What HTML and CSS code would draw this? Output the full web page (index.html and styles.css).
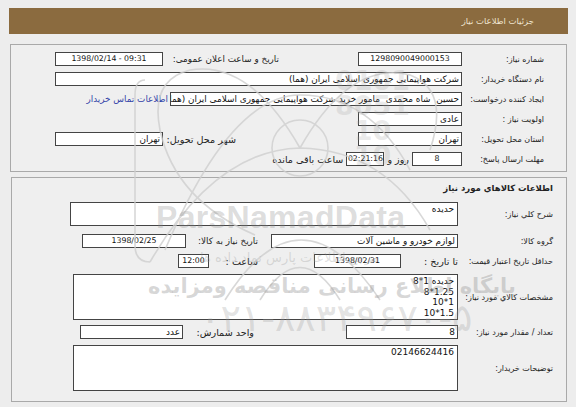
FILE: index.html
```html
<!DOCTYPE html>
<html lang="fa" dir="rtl">
<head>
<meta charset="utf-8">
<title>جزئیات اطلاعات نیاز</title>
<link rel="stylesheet" href="styles.css">
</head>
<body>
<div class="page">
  <div class="header">جزئیات اطلاعات نیاز</div>

  <div class="panel panel-top">
    <div class="row g1">
      <div class="lbl">شماره نیاز:</div>
      <div class="in num">1298090049000153</div>
      <div class="txt sm pr79">تاریخ و ساعت اعلان عمومی:</div>
      <div class="in num">1398/02/14 - 09:31</div>
    </div>
    <div class="row g1">
      <div class="lbl">نام دستگاه خریدار:</div>
      <div class="in span3">شرکت هواپیمایی جمهوری اسلامی ایران (هما)</div>
    </div>
    <div class="row g1">
      <div class="lbl">ایجاد کننده درخواست:</div>
      <div class="span3 flexrow">
        <div class="in w-creator">حسین  شاه محمدی  مامور خرید شرکت هواپیمایی جمهوری اسلامی ایران (هما)</div>
        <a class="txt sm link" href="#">اطلاعات تماس خریدار</a>
      </div>
    </div>
    <div class="row g1">
      <div class="lbl">اولویت نیاز :</div>
      <div class="in">عادی</div>
    </div>
    <div class="row g1">
      <div class="lbl">استان محل تحویل:</div>
      <div class="in">تهران</div>
      <div class="txt pr122">شهر محل تحویل:</div>
      <div class="in">تهران</div>
    </div>
    <div class="row deadline">
      <div class="lbl lbl-dl">مهلت ارسال پاسخ:</div>
      <div class="in num w-days">8</div>
      <div class="txt gap3">روز و</div>
      <div class="in num w-time">02:21:16</div>
      <div class="txt gap3">ساعت باقی مانده</div>
    </div>
  </div>

  <div class="panel panel-goods">
    <div class="title">اطلاعات كالاهاي مورد نياز</div>
    <div class="row2 r-desc">
      <div class="lbl">شرح كلي نياز:</div>
      <div class="in area a-short">حدیده</div>
    </div>
    <div class="row2">
      <div class="lbl">گروه كالا:</div>
      <div class="in w-group">لوازم خودرو و ماشین آلات</div>
      <div class="txt sm cell-need">تاریخ نیاز به کالا:</div>
      <div class="in num w-need">1398/02/25</div>
    </div>
    <div class="row2">
      <div class="lbl">حداقل تاریخ اعتبار قیمت:</div>
      <div class="txt cell-to">تا تاریخ :</div>
      <div class="in num w-valid">1398/02/31</div>
      <div class="txt cell-hour">ساعت :</div>
      <div class="in num w-hour">12:00</div>
    </div>
    <div class="row2 r-spec">
      <div class="lbl">مشخصات كالاي مورد نياز:</div>
      <div class="in area a-tall spec">
        <div>حدیده 1*8</div>
        <div>8*1.25</div>
        <div>10*1</div>
        <div>10*1.5</div>
      </div>
    </div>
    <div class="row2">
      <div class="lbl">تعداد / مقدار مورد نیاز:</div>
      <div class="in w-qty">8</div>
      <div class="txt cell-unit">واحد شمارش:</div>
      <div class="in w-unit">عدد</div>
    </div>
    <div class="row2 r-notes">
      <div class="lbl">توضیحات خریدار:</div>
      <div class="in area a-tall">02146624416</div>
    </div>
  </div>
</div>

<div class="watermark" aria-hidden="true">
  <svg class="wm-logo" width="576" height="407" viewBox="0 0 576 407">
    <g fill="none" stroke="#cfcfcf" stroke-width="1.6">
      <path d="M145 80 Q135 80 135 95 L135 245 Q135 262 150 262"/>
      <path d="M150 262 Q215 150 300 148 Q385 150 430 230"/>
      <path d="M165 250 Q230 95 300 95 Q370 95 410 170"/>
      <path d="M300 148 Q250 60 190 70 Q150 80 160 130 Q175 200 255 235"/>
      <path d="M300 148 Q350 60 410 75 Q450 90 430 150"/>
      <path d="M225 300 Q300 180 380 300"/>
      <path d="M260 300 Q300 235 340 300"/>
      <circle cx="300" cy="148" r="28"/>
    </g>
  </svg>
  <div class="wm-digits">0101<br>8051<br>10<br>10</div>
  <div class="wm-brand">ParsNamadData</div>
  <div class="wm-sub">مرجع اطلاعات پارس نماد داده ها</div>
  <div class="wm-line">پایگاه اطلاع رسانی مناقصه ومزایده</div>
  <div class="wm-phone" dir="ltr">۰۲۱-۸۸۳۴۹۶۷۰-۵</div>
</div>
</body>
</html>
```

FILE: styles.css
```css
* { box-sizing: border-box; }

html, body {
  margin: 0;
  padding: 0;
}

body {
  width: 576px;
  height: 407px;
  overflow: hidden;
  position: relative;
  background: #ededed;
  font-family: "DejaVu Sans", sans-serif;
  font-size: 8px;
  color: #222;
}

.page {
  padding: 8px 8px 0 9px;
}

.header {
  height: 26px;
  background: #8b6b3f;
  color: #efe5d0;
  display: flex;
  align-items: center;
  padding-right: 34px;
  font-size: 8.5px;
}

.panel {
  margin: 10px 1px 0 1px;
  border: 1px solid #a9a9a9;
  background: #efefef;
}

.panel-top {
  padding: 7px 22px 5px 0;
  display: flex;
  flex-direction: column;
  gap: 6px;
}

.row {
  height: 14px;
  align-items: center;
}

.g1 {
  display: grid;
  grid-template-columns: 82px 104px 195px 108px;
}

.lbl {
  white-space: nowrap;
  font-size: 8px;
  color: #222;
}

.txt {
  white-space: nowrap;
  font-size: 9.6px;
  color: #222;
}

.txt.sm { font-size: 8.8px; }

.pr79 { padding-right: 79px; }
.pr122 { padding-right: 122px; }
.gap3 { margin: 0 3px; }

.in {
  background: #fff;
  border: 1px solid #444;
  height: 14px;
  line-height: 12px;
  padding: 0 2px;
  white-space: pre;
  overflow: hidden;
  color: #111;
  text-align: right;
  font-size: 8.9px;
}

.num {
  text-align: center;
  direction: ltr;
  font-size: 7.8px;
}

.span3 { grid-column: 2 / 5; }

.flexrow {
  display: flex;
  align-items: center;
}

.w-creator { width: 292px; flex: none; }

.link {
  color: #3343a8;
  text-decoration: none;
  margin-right: 2px;
}

.deadline {
  display: flex;
}

.lbl-dl { width: 82px; flex: none; }
.w-days { width: 50px; flex: none; }
.w-time { width: 38px; flex: none; padding: 0; }

/* goods panel */
.panel-goods {
  margin-top: 5px;
  margin-left: 2px;
  padding: 5px 13px 10px 0;
  display: flex;
  flex-direction: column;
}

.title {
  font-weight: bold;
  font-size: 8.5px;
  height: 11px;
  line-height: 11px;
  margin-bottom: 8px;
}

.row2 {
  display: flex;
  align-items: center;
  margin-bottom: 6px;
}

.row2 .lbl {
  width: 95px;
  flex: none;
}

.area {
  white-space: normal;
  line-height: 10.5px;
  padding: 1px 3px;
  text-align: right;
  font-size: 9px;
}

.spec {
  direction: ltr;
  text-align: right;
}

.a-short { width: 388px; height: 24px; flex: none; }
.a-tall { width: 385px; height: 46px; flex: none; }

.r-desc { margin-bottom: 8px; }
.r-spec { margin-bottom: 5px; }
.r-notes { margin-bottom: 0; }

.w-group { width: 187px; flex: none; }
.cell-need { width: 85px; flex: none; padding-right: 13px; }
.w-need { width: 104px; flex: none; }

.cell-to { width: 57px; flex: none; }
.w-valid { width: 87px; flex: none; }
.cell-hour { width: 105px; flex: none; padding-right: 56px; }
.w-hour { width: 31px; flex: none; padding: 0; }

.w-qty { width: 112px; flex: none; }
.cell-unit { width: 163px; flex: none; padding-right: 92px; }
.w-unit { width: 103px; flex: none; }

/* watermark overlay */
.watermark {
  position: absolute;
  inset: 0;
  pointer-events: none;
}

.wm-logo {
  position: absolute;
  left: 0;
  top: 0;
  opacity: 0.8;
}

.wm-digits {
  position: absolute;
  left: 335px;
  top: 68px;
  font-family: "DejaVu Sans", sans-serif;
  font-weight: bold;
  font-size: 27px;
  line-height: 25px;
  color: rgba(160, 160, 160, 0.22);
  direction: ltr;
  text-align: center;
}

.wm-brand {
  position: absolute;
  left: 156px;
  top: 199px;
  direction: ltr;
  font-family: "Liberation Sans", sans-serif;
  font-weight: bold;
  font-size: 32px;
  letter-spacing: 0.3px;
  color: rgba(140, 140, 140, 0.3);
}

.wm-sub {
  position: absolute;
  left: 200px;
  top: 250px;
  font-size: 13px;
  color: rgba(150, 150, 150, 0.3);
}

.wm-line {
  position: absolute;
  left: 148px;
  top: 274px;
  font-size: 21px;
  font-weight: bold;
  color: rgba(150, 150, 150, 0.38);
}

.wm-phone {
  position: absolute;
  left: 200px;
  top: 296px;
  font-size: 38px;
  color: rgba(160, 160, 160, 0.3);
}
```
